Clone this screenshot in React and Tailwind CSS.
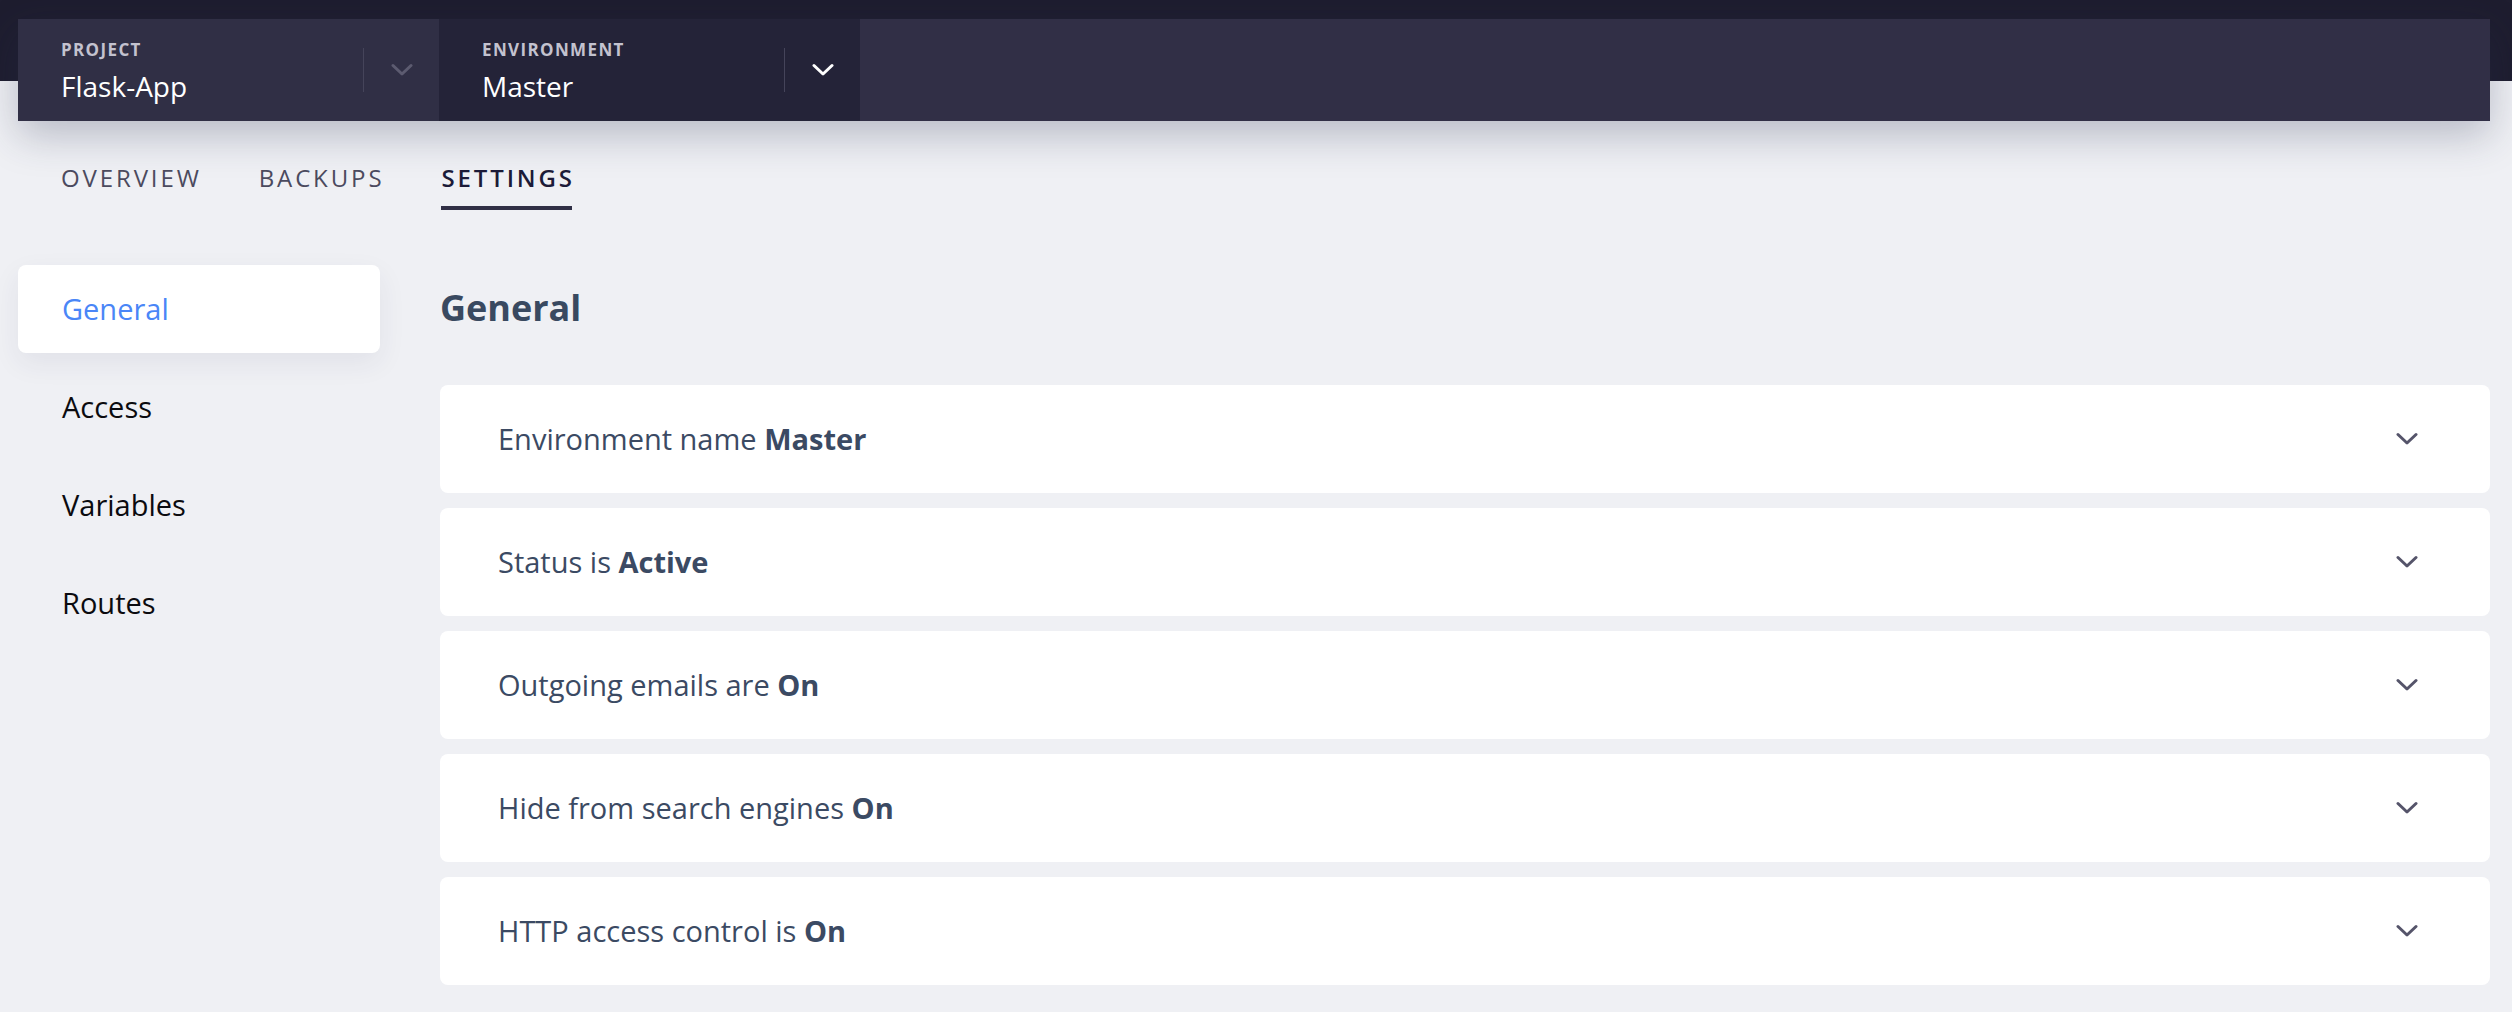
import React from "react";

function Chevron({ className }) {
  return (
    <svg width="22" height="14" viewBox="0 0 22 14" className={className} fill="none">
      <polyline points="2,2.5 11,11 20,2.5" stroke="currentColor" strokeWidth="3" strokeLinecap="round" strokeLinejoin="round" />
    </svg>
  );
}

function Selector({ label, value, bg, chevronColor }) {
  return (
    <div className={`w-[421px] h-full flex items-center ${bg}`}>
      <div className="flex-1 pl-[43px] pt-[3px] flex flex-col">
        <div className="text-[17px] leading-[20px] font-bold tracking-[0.08em] text-[#c3c2cf]">{label}</div>
        <div className="text-[28px] leading-[34px] text-white mt-[9px]">{value}</div>
      </div>
      <div className="w-px h-[44px] bg-[#45445a]" />
      <div className={`w-[75px] flex justify-center ${chevronColor}`}>
        <Chevron />
      </div>
    </div>
  );
}

const rows = [
  ["Environment name ", "Master"],
  ["Status is ", "Active"],
  ["Outgoing emails are ", "On"],
  ["Hide from search engines ", "On"],
  ["HTTP access control is ", "On"],
];

export default function App() {
  return (
    <div className="min-h-screen bg-[linear-gradient(to_bottom,#1e1d2f_81px,#eff0f4_81px)] font-['Open_Sans',sans-serif] pt-[19px]">
      <div className="ml-[18px] mr-[22px] h-[102px] flex bg-[#312f46] shadow-[0_14px_40px_rgba(40,45,80,0.28)]">
        <Selector label="PROJECT" value="Flask-App" bg="bg-[#302f45]" chevronColor="text-[#5c5b70]" />
        <Selector label="ENVIRONMENT" value="Master" bg="bg-[#242338]" chevronColor="text-white" />
      </div>

      <div className="flex gap-[57px] pl-[61px] pt-[42px]">
        <div className="text-[24px] leading-[30px] tracking-[0.12em] text-[#4b4a5e]">OVERVIEW</div>
        <div className="text-[24px] leading-[30px] tracking-[0.12em] text-[#4b4a5e]">BACKUPS</div>
        <div className="flex flex-col">
          <div className="text-[24px] leading-[30px] tracking-[0.12em] text-[#1c1b38] font-semibold">SETTINGS</div>
          <div className="h-[4px] bg-[#302f45] mt-[13px] mr-[3px]" />
        </div>
      </div>

      <div className="flex gap-[60px] pl-[18px] pr-[22px] pt-[55px]">
        <div className="w-[362px] flex flex-col gap-[10px]">
          <div className="h-[88px] rounded-[8px] bg-white shadow-[0_10px_28px_rgba(40,45,80,0.07)] flex items-center pl-[44px] text-[29px] text-[#4a86f7]">General</div>
          <div className="h-[88px] flex items-center pl-[44px] text-[29px] text-[#0b0b0f]">Access</div>
          <div className="h-[88px] flex items-center pl-[44px] text-[29px] text-[#0b0b0f]">Variables</div>
          <div className="h-[88px] flex items-center pl-[44px] text-[29px] text-[#0b0b0f]">Routes</div>
        </div>
        <div className="flex-1 flex flex-col">
          <div className="h-[86px] flex items-center text-[36px] font-bold text-[#394960]">General</div>
          <div className="mt-[34px] flex flex-col gap-[15px]">
            {rows.map(([t, b]) => (
              <div key={t} className="h-[108px] rounded-[8px] bg-white flex items-center pl-[58px] pr-[72px]">
                <div className="flex-1 text-[29px] text-[#3b4a63]">
                  {t}
                  <span className="font-bold">{b}</span>
                </div>
                <Chevron className="text-[#55546a]" />
              </div>
            ))}
          </div>
        </div>
      </div>
    </div>
  );
}
